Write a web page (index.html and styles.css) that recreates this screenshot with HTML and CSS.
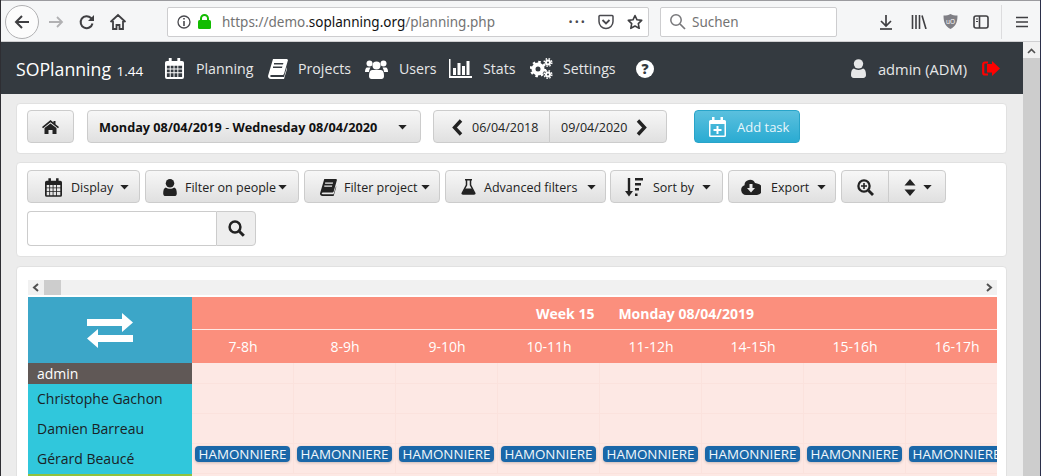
FILE: index.html
```html
<!DOCTYPE html>
<html lang="en">
<head>
<meta charset="utf-8">
<title>SOPlanning</title>
<link rel="stylesheet" href="styles.css">
</head>
<body>
<svg class="defs" width="0" height="0" aria-hidden="true">
  <symbol id="i-cal" viewBox="0 0 20 22"><path fill="currentColor" fill-rule="evenodd" d="M4 0h3v3h6V0h3v3h2a2 2 0 0 1 2 2v15a2 2 0 0 1-2 2H2a2 2 0 0 1-2-2V5a2 2 0 0 1 2-2h2zM2 8v3h3V8zm4 0v3h3V8zm4 0v3h3V8zm4 0v3h4V8zM2 12v3h3v-3zm4 0v3h3v-3zm4 0v3h3v-3zm4 0v3h4v-3zM2 16v4h3v-4zm4 0v4h3v-4zm4 0v4h3v-4zm4 0v4h4v-4z"/></symbol>
  <symbol id="i-book" viewBox="0 0 20 20"><path fill="currentColor" fill-rule="evenodd" d="M5 0h14l1 1-4 14-1 1H4c-1 0-2 .5-2 1s1 1 2 1h12l3-10v2l-3 10-1 0H3c-2 0-3-1.500-3-3zM6 4v1.500h9l.4-1.500zM5 7.500V9h9l.4-1.500z"/></symbol>
  <symbol id="i-user" viewBox="0 0 16 20"><circle cx="8" cy="5" r="5" fill="currentColor"/><path fill="currentColor" d="M3 10c1.500 1 3 1.500 5 1.500s3.500-.5 5-1.500c2 .5 3 3 3 7 0 2-1 3-3 3H3c-2 0-3-1-3-3 0-4 1-6.500 3-7z"/></symbol>
  <symbol id="i-caret" viewBox="0 0 10 6"><path fill="currentColor" d="M0 0h10L5 5.500z"/></symbol>
</svg>

<header class="browser">
  <div class="back"><svg width="20" height="20" viewBox="0 0 20 20"><path d="M17 10H4M10 4l-6 6 6 6" fill="none" stroke="#3f3f42" stroke-width="2"/></svg></div>
  <svg class="tool t-fwd" width="18" height="18" viewBox="0 0 18 18"><path d="M2 9h13M10 4l5 5-5 5" fill="none" stroke="#b1b1b3" stroke-width="1.800"/></svg>
  <svg class="tool t-reload" width="16" height="16" viewBox="0 0 16 16"><path d="M13.500 9.500A6 6 0 1 1 12 4l2 2" fill="none" stroke="#3f3f42" stroke-width="2"/><path d="M15 1v6H9z" fill="#3f3f42"/></svg>
  <svg class="tool t-home" width="18" height="18" viewBox="0 0 18 18"><path d="M1.500 9 9 2l7.500 7M4 8v8h3.500v-4h3v4H14V8" fill="none" stroke="#3f3f42" stroke-width="1.800"/></svg>
  <div class="urlbar">
    <svg class="u-info" width="14" height="14" viewBox="0 0 14 14"><circle cx="7" cy="7" r="6" fill="none" stroke="#4a4a4f" stroke-width="1.300"/><path d="M6.200 3h1.600v1.600H6.200zM6.200 6h1.600v5H6.200z" fill="#4a4a4f"/></svg>
    <svg class="u-lock" width="13" height="15" viewBox="0 0 13 15"><path d="M3 7V4.500a3.500 3.500 0 0 1 7 0V7" fill="none" stroke="#12bc00" stroke-width="2"/><rect y="6" width="13" height="9" rx="1.500" fill="#12bc00"/></svg>
    <span class="url">https://demo.<b>soplanning.org</b>/planning.php</span>
    <span class="dots">•••</span>
    <svg class="u-pocket" width="16" height="16" viewBox="0 0 16 16"><path d="M2 1.500h12A1.200 1.200 0 0 1 15 3v4.500a7 7 0 0 1-14 0V3a1.200 1.200 0 0 1 1-1.500z" fill="none" stroke="#4a4a4f" stroke-width="1.500"/><path d="m4.500 6 3.500 3.500L11.500 6" fill="none" stroke="#4a4a4f" stroke-width="1.800"/></svg>
    <svg class="u-star" width="16" height="16" viewBox="0 0 16 16"><path d="m8 1.500 2 4.300 4.700.6-3.400 3.200.9 4.700L8 12l-4.200 2.300.9-4.700L1.300 6.400 6 5.800z" fill="none" stroke="#3f3f42" stroke-width="1.600" stroke-linejoin="round"/></svg>
  </div>
  <div class="searchbar">
    <svg width="17" height="17" viewBox="0 0 17 17"><circle cx="7" cy="7" r="5.200" fill="none" stroke="#77777a" stroke-width="1.500"/><path d="m11 11 5 5" stroke="#77777a" stroke-width="1.700"/></svg>
    <span>Suchen</span>
  </div>
  <svg class="tool t-dl" width="14" height="16" viewBox="0 0 14 16"><path d="M7 1v10M2 7l5 5 5-5" fill="none" stroke="#3f3f42" stroke-width="1.700"/><path d="M1 15h12" stroke="#3f3f42" stroke-width="1.700"/></svg>
  <svg class="tool t-lib" width="16" height="14" viewBox="0 0 16 14"><path d="M1.500 0v14M5 0v14M8.500 0v14M11 .500 15 14" fill="none" stroke="#3f3f42" stroke-width="1.600"/></svg>
  <svg class="tool t-ub" width="15" height="15" viewBox="0 0 15 15"><path d="M7.500 0c2 1 4 1.500 7 1.500 0 7-2 11-7 13.500C2.500 12.500.500 8.500.500 1.500c3 0 5-.5 7-1.500z" fill="#7f7f85"/><text x="7.500" y="9.500" class="ub-text">uO</text></svg>
  <svg class="tool t-side" width="16" height="14" viewBox="0 0 16 14"><rect x="1" y="1" width="14" height="12" rx="2" fill="none" stroke="#3f3f42" stroke-width="1.600"/><path d="M6.500 1v12" stroke="#3f3f42" stroke-width="1.600"/><path d="M3 4h2M3 6.500h2" stroke="#3f3f42"/></svg>
  <span class="sep"></span>
  <svg class="tool t-menu" width="14" height="12" viewBox="0 0 14 12"><path d="M1 1.500h12M1 6h12M1 10.500h12" stroke="#3f3f42" stroke-width="1.500"/></svg>
</header>

<div class="viewport">
  <div class="page">
    <nav class="nav">
      <span class="brand">SOPlanning <small>1.44</small></span>
      <a class="nav-item i-planning"><svg width="19" height="21"><use href="#i-cal"/></svg>Planning</a>
      <a class="nav-item i-projects"><svg width="20" height="20"><use href="#i-book"/></svg>Projects</a>
      <a class="nav-item i-users"><svg width="23" height="20" viewBox="0 0 23 20"><circle cx="4.500" cy="4.500" r="3" fill="currentColor"/><circle cx="18.500" cy="4.500" r="3" fill="currentColor"/><path fill="currentColor" d="M0 13c0-3 1-4.500 2-4.500h3.500C4.500 10 4 12 4 13zM23 13c0-3-1-4.500-2-4.500h-3.500C18.500 10 19 12 19 13z"/><circle cx="11.500" cy="6.500" r="4" fill="currentColor"/><path fill="currentColor" d="M7 11h9c2 0 3 2 3 6 0 2-1 3-2.500 3h-10C5 20 4 19 4 17c0-4 1-6 3-6z"/></svg>Users</a>
      <a class="nav-item i-stats"><svg width="23" height="19" viewBox="0 0 23 19"><path fill="currentColor" d="M0 0h1.500v17H23v2H0zM4 9h3v7H4zM8.500 4h3v12h-3zM13 7h3v9h-3zM17.500 2h3v14h-3z"/></svg>Stats</a>
      <a class="nav-item i-settings"><svg width="23" height="21" viewBox="0 0 23 21"><g fill="none" stroke="currentColor"><circle cx="8" cy="11" r="4.500" stroke-width="4"/><circle cx="8" cy="11" r="7" stroke-width="2.500" stroke-dasharray="2.500 3"/><circle cx="18" cy="4.500" r="2" stroke-width="2"/><circle cx="18" cy="4.500" r="3.800" stroke-width="1.500" stroke-dasharray="1.500 1.500"/><circle cx="18" cy="16.500" r="2" stroke-width="2"/><circle cx="18" cy="16.500" r="3.800" stroke-width="1.500" stroke-dasharray="1.500 1.500"/></g></svg>Settings</a>
      <a class="nav-help">?</a>
      <span class="nav-user"><svg width="15" height="19"><use href="#i-user"/></svg>admin (ADM)</span>
      <svg class="logout" width="18" height="15" viewBox="0 0 18 15"><path fill="#f00" d="M10 3V0l8 7.500-8 7.500v-3.500H5V3z"/><path d="M6 1.500H3A1.800 1.800 0 0 0 1.200 3.300v8.400A1.800 1.800 0 0 0 3 13.500h3" fill="none" stroke="#f00" stroke-width="2.200"/></svg>
    </nav>

    <main class="content">
      <section class="card card-top">
        <button class="btn b-home"><svg width="17" height="14" viewBox="0 0 17 14"><path fill="#222" d="M8.500 0l3 2.500V1h2v3.200L17 7l-1 1.200-7.500-6-7.500 6L0 7z"/><path fill="#222" d="M8.500 3.500 14.500 8v6h-4v-4h-4v4h-4V8z"/></svg></button>
        <button class="btn b-date"><span><b>Monday 08/04/2019</b> - <b>Wednesday 08/04/2020</b></span><svg class="caret" width="9" height="5"><use href="#i-caret"/></svg></button>
        <div class="group g-nav">
          <button class="btn b-prev"><svg width="11" height="17" viewBox="0 0 11 17"><path d="M9 1.500 2.500 8.500 9 15.500" fill="none" stroke="#222" stroke-width="3.400"/></svg>06/04/2018</button>
          <button class="btn b-next">09/04/2020<svg width="11" height="17" viewBox="0 0 11 17"><path d="M2 1.500 8.500 8.500 2 15.500" fill="none" stroke="#222" stroke-width="3.400"/></svg></button>
        </div>
        <button class="btn b-add"><svg width="17" height="20" viewBox="0 0 17 20"><path fill="#fff" fill-rule="evenodd" d="M3 0h2.500v3h6V0H14v3h1.500A1.500 1.500 0 0 1 17 4.500v14a1.500 1.500 0 0 1-1.500 1.500h-14A1.500 1.500 0 0 1 0 18.500v-14A1.500 1.500 0 0 1 1.500 3H3zM1.500 7v11.500h14V7z"/><path fill="#fff" d="M7.500 9h2v3h3v2h-3v3h-2v-3h-3v-2h3z"/></svg>Add task</button>
      </section>

      <section class="card card-filters">
        <div class="row">
          <button class="btn b-display"><svg width="17" height="19"><use href="#i-cal"/></svg>Display<svg class="caret" width="9" height="5"><use href="#i-caret"/></svg></button>
          <button class="btn b-people"><svg width="14" height="17"><use href="#i-user"/></svg>Filter on people<svg class="caret" width="9" height="5"><use href="#i-caret"/></svg></button>
          <button class="btn b-proj"><svg width="17" height="17"><use href="#i-book"/></svg>Filter project<svg class="caret" width="9" height="5"><use href="#i-caret"/></svg></button>
          <button class="btn b-adv"><svg width="15" height="16" viewBox="0 0 15 16"><path d="M4 .8h7M5.500 1v5L1.200 14.200q-.2.900.8.900h11q1 0 .8-.9L9.500 6V1" fill="none" stroke="#222" stroke-width="1.500"/><path d="M3.800 9.500h7.400l2.500 5.500H1.300z" fill="#222"/></svg>Advanced filters<svg class="caret" width="9" height="5"><use href="#i-caret"/></svg></button>
          <button class="btn b-sort"><svg width="18" height="19" viewBox="0 0 18 19"><path d="M4 0v15" stroke="#222" stroke-width="2.400"/><path d="M0 13h8l-4 5.500z" fill="#222"/><path d="M10 0h8v2.500h-8zM10 5h6v2.500h-6zM10 10h4v2.500h-4zM10 15.500h2.500V18H10z" fill="#222"/></svg>Sort by<svg class="caret" width="9" height="5"><use href="#i-caret"/></svg></button>
          <button class="btn b-export"><svg width="20" height="16" viewBox="0 0 20 16"><path fill="#222" fill-rule="evenodd" d="M5 16a5 5 0 0 1-1.500-9.700A5.500 5.500 0 0 1 14 4a4 4 0 0 1 2 .5A5.800 5.800 0 0 1 16 16zM8.500 5v4H6l4 4.500 4-4.500h-2.500V5z"/></svg>Export<svg class="caret" width="9" height="5"><use href="#i-caret"/></svg></button>
          <div class="group g-zoom">
            <button class="btn b-zoom"><svg width="17" height="17" viewBox="0 0 17 17"><circle cx="7" cy="7" r="5.600" fill="none" stroke="#222" stroke-width="2.300"/><path d="m11.500 11.500 4.500 4.500" stroke="#222" stroke-width="2.800"/><path d="M6.200 4h1.600v2.200H10v1.600H7.800V10H6.200V7.800H4V6.200h2.200z" fill="#222"/></svg></button>
            <button class="btn b-sortv"><svg width="12" height="17" viewBox="0 0 12 17"><path fill="#222" d="M6 0l5.500 6.500H.5zM6 17 .5 10.500h11z"/></svg><svg class="caret" width="9" height="5"><use href="#i-caret"/></svg></button>
          </div>
        </div>
        <div class="search">
          <span class="search-input"></span>
          <button class="search-btn"><svg width="17" height="17" viewBox="0 0 17 17"><circle cx="7" cy="7" r="5.400" fill="none" stroke="#222" stroke-width="2.500"/><path d="m11.200 11.200 4.600 4.600" stroke="#222" stroke-width="3"/></svg></button>
        </div>
      </section>

      <section class="card card-plan">
        <div class="hscroll">
          <svg class="arrow" width="8" height="9" viewBox="0 0 8 9"><path d="M6 1 2 4.500 6 8" fill="none" stroke="#505050" stroke-width="2"/></svg>
          <span class="hthumb"></span>
          <svg class="arrow arrow-r" width="8" height="9" viewBox="0 0 8 9"><path d="M2 1l4 3.500L2 8" fill="none" stroke="#505050" stroke-width="2"/></svg>
        </div>
        <div class="plan">
          <div class="plan-left">
            <div class="swap"><svg width="46" height="35" viewBox="0 0 46 35"><path fill="#fff" d="M0 6h35V0l11 9.500L35 19v-6H0zM46 22H11v-6L0 25.500 11 35v-6h35z"/></svg></div>
            <div class="person p-admin">admin</div>
            <div class="person p-cyan">Christophe Gachon</div>
            <div class="person p-cyan">Damien Barreau</div>
            <div class="person p-cyan">Gérard Beaucé</div>
            <div class="p-green"></div>
          </div>
          <div class="plan-right">
            <div class="week"><b>Week 15</b><b>Monday 08/04/2019</b></div>
            <div class="grid">
              <div class="h">7-8h</div><div class="h">8-9h</div><div class="h">9-10h</div><div class="h">10-11h</div><div class="h">11-12h</div><div class="h">14-15h</div><div class="h">15-16h</div><div class="h">16-17h</div>
              <div class="c"></div><div class="c"></div><div class="c"></div><div class="c"></div><div class="c"></div><div class="c"></div><div class="c"></div><div class="c"></div>
              <div class="c"></div><div class="c"></div><div class="c"></div><div class="c"></div><div class="c"></div><div class="c"></div><div class="c"></div><div class="c"></div>
              <div class="c"></div><div class="c"></div><div class="c"></div><div class="c"></div><div class="c"></div><div class="c"></div><div class="c"></div><div class="c"></div>
              <div class="c"><span class="task">HAMONNIERE</span></div><div class="c"><span class="task">HAMONNIERE</span></div><div class="c"><span class="task">HAMONNIERE</span></div><div class="c"><span class="task">HAMONNIERE</span></div><div class="c"><span class="task">HAMONNIERE</span></div><div class="c"><span class="task">HAMONNIERE</span></div><div class="c"><span class="task">HAMONNIERE</span></div><div class="c"><span class="task">HAMONNIERE</span></div>
            </div>
          </div>
        </div>
      </section>
    </main>
  </div>
  <aside class="vscroll">
    <svg width="9" height="6" viewBox="0 0 9 6"><path d="M1 5l3.500-3.500L8 5" fill="none" stroke="#505050" stroke-width="1.600"/></svg>
    <span class="vthumb"></span>
  </aside>
</div>
</body>
</html>
```

FILE: styles.css
```css
* { box-sizing: border-box; }
html, body { margin: 0; height: 100%; overflow: hidden; }
body { width: 1041px; height: 476px; font-family: "Open Sans", "Noto Sans", sans-serif; background: #ececec; border-left: 1px solid #2e2e33; border-right: 1px solid #2b2f4a; display: flex; flex-direction: column; }
.defs { position: absolute; }
svg { display: block; flex: none; }

/* browser toolbar */
.browser { height: 42px; flex: none; display: flex; align-items: center; background: #f5f6f7; border-top: 1px solid #9b9b9f; border-bottom: 1px solid #cfcfd1; padding-top: 1px; color: #3f3f42; }
.back { width: 34px; height: 34px; margin-left: 4px; border: 1px solid #b1b1b3; border-radius: 50%; background: #fcfcfc; display: flex; align-items: center; justify-content: center; }
.t-fwd { margin-left: 8px; }
.t-reload { margin-left: 14px; }
.t-home { margin-left: 14px; }
.urlbar { width: 482px; height: 30px; margin-left: 40px; background: #fff; border: 1px solid #cdcdcf; border-radius: 2px; display: flex; align-items: center; font-family: "Noto Sans", "Open Sans", sans-serif; }
.u-info { margin-left: 9px; }
.u-lock { margin-left: 7px; }
.url { margin-left: 11px; font-size: 13.500px; color: #737373; white-space: nowrap; }
.url b { font-weight: 400; color: #111; }
.dots { margin-left: auto; font-size: 11px; letter-spacing: 2px; color: #4a4a4f; }
.u-pocket { margin-left: 11px; }
.u-star { margin-left: 13px; margin-right: 5px; }
.searchbar { width: 177px; height: 30px; margin-left: 11px; background: #fff; border: 1px solid #cdcdcf; border-radius: 2px; display: flex; align-items: center; gap: 6px; padding-left: 8px; font-size: 13.500px; color: #737373; font-family: "Noto Sans", "Open Sans", sans-serif; }
.t-dl { margin-left: 42px; }
.t-lib { margin-left: 18px; }
.t-ub { margin-left: 16px; }
.t-side { margin-left: 15px; }
.ub-text { font-family: "Open Sans", sans-serif; font-size: 6.500px; fill: #fff; text-anchor: middle; }
.sep { width: 1px; height: 34px; background: #dcdcde; margin-left: 12px; }
.t-menu { margin-left: 13px; }

/* layout */
.viewport { flex: 1; min-height: 0; display: flex; }
.page { flex: 1; min-width: 0; overflow: hidden; }
.vscroll { width: 17px; flex: none; background: #f1f1f1; display: flex; flex-direction: column; align-items: center; padding-top: 6px; }
.vthumb { width: 17px; flex: 1; margin-top: 4px; background: #cdcdcd; }

/* navbar */
.nav { height: 52px; background: #343a40; color: #fff; display: flex; align-items: center; padding: 1px 0 0 15px; font-size: 14.200px; }
.brand { font-size: 17.700px; width: 149px; white-space: nowrap; }
.brand small { font-size: 13.500px; margin-left: 1px; }
.nav-item { display: flex; align-items: center; color: #e6e7e8; white-space: nowrap; }
.nav-item svg { color: #fff; }
.i-planning svg { margin-right: 12px; }
.i-planning { width: 103px; }
.i-projects svg { margin-right: 10px; }
.i-projects { width: 97px; }
.i-users svg { margin-right: 11px; }
.i-users { width: 84px; }
.i-stats svg { margin-right: 11px; }
.i-stats { width: 81px; }
.i-settings svg { margin-right: 10px; }
.i-settings { width: 106px; }
.nav-help { width: 18px; height: 18px; border-radius: 50%; background: #fff; color: #343a40; font-size: 14px; font-weight: 800; line-height: 18px; text-align: center; }
.nav-user { display: flex; align-items: center; gap: 12px; margin-left: auto; color: #e6e7e8; white-space: nowrap; font-size: 14.700px; }
.logout { margin: 0 23px 0 15px; }

/* content */
.content { padding: 9px 0 0 15px; }
.card { background: #fff; border: 1px solid #e1e1e1; border-radius: 4px; width: 991px; }
.card-top { height: 51px; padding: 6px 10px; display: flex; align-items: flex-start; }
.card-filters { height: 95px; margin-top: 8px; padding: 7px 10px; }
.card-plan { height: 220px; margin-top: 9px; padding: 13px 10px 0 11px; }
.row { display: flex; gap: 5px; }
.btn { height: 33px; padding: 1px 0 0; border: 1px solid #ccc; border-radius: 4px; background: linear-gradient(#f7f7f7, #e0e0e0); color: #222; font: 12.500px "Open Sans", "Noto Sans", sans-serif; display: flex; align-items: center; white-space: nowrap; }
.btn .caret { color: #222; }
.b-home { width: 47px; justify-content: center; }
.b-date { width: 334px; margin-left: 13px; padding-left: 11px; font-size: 12.700px; color: #111; }
.b-date .caret { margin-left: auto; margin-right: 13px; }
.group { display: flex; }
.group .btn:first-child { border-radius: 4px 0 0 4px; }
.group .btn:last-child { border-radius: 0 4px 4px 0; margin-left: -1px; }
.g-nav { margin-left: 12px; }
.b-prev { width: 117px; padding-left: 18px; gap: 9px; }
.b-next { width: 118px; padding-left: 11px; gap: 9px; }
.b-add { width: 106px; margin-left: 27px; padding-left: 14px; gap: 11px; color: #e8f6fb; background: linear-gradient(#5bc0de, #2aabd2); border-color: #28a4c9; font-size: 13px; }

.b-display { width: 113px; padding-left: 17px; gap: 9px; }
.b-display .caret { margin-left: -2px; }
.b-people { width: 154px; padding-left: 17px; gap: 8px; }
.b-people .caret { margin-left: -6px; }
.b-proj { width: 136px; padding-left: 15px; gap: 7px; }
.b-proj .caret { margin-left: -4px; }
.b-adv { width: 161px; padding-left: 15px; gap: 8px; margin-right: -1px; }
.b-adv .caret { margin-left: 2px; }
.b-sort { width: 113px; padding-left: 14px; gap: 10px; }
.b-sort .caret { margin-left: -2px; }
.b-export { width: 108px; padding-left: 12px; gap: 10px; }
.b-export .caret { margin-left: -2px; }
.b-zoom { width: 48px; justify-content: center; }
.b-sortv { width: 58px; padding-left: 15px; gap: 7px; }

.search { display: flex; width: 229px; height: 35px; margin-top: 8px; }
.search-input { flex: 1; background: #fff; border: 1px solid #ccc; border-right: 0; border-radius: 4px 0 0 4px; }
.search-btn { width: 40px; padding: 0; background: #eee; border: 1px solid #ccc; border-radius: 0 4px 4px 0; display: flex; align-items: center; justify-content: center; }

/* planning */
.hscroll { width: 969px; height: 15px; background: #f1f1f1; display: flex; align-items: center; padding-left: 4px; }
.hthumb { width: 17px; height: 15px; margin-left: 4px; background: #cdcdcd; }
.arrow-r { margin-left: auto; margin-right: 4px; }
.plan { display: flex; width: 969px; height: 185px; margin-top: 2px; overflow: hidden; }
.plan-left { width: 164px; flex: none; }
.swap { height: 66px; background: #3ca6c8; display: flex; align-items: center; justify-content: center; }
.person { padding-left: 9px; font-size: 14px; color: #1a2226; height: 30px; background: #30c7dc; line-height: 29px; }
.p-admin { height: 21px; background: #605856; color: #fff; line-height: 21px; }
.p-green { height: 8px; background: #8fc23f; }
.plan-right { flex: 1; min-width: 0; background: #fde8e4; }
.week { height: 33px; background: #fb8f7d; border-bottom: 1px solid #ffe9e4; color: #fff; font-size: 14px; display: flex; align-items: center; gap: 24px; padding-left: 344px; }
.grid { display: grid; grid-template-columns: repeat(8, 102px); grid-template-rows: 33px 21px 30px 30px 30px; width: 816px; }
.h { background: #fb8f7d; color: #fff; font-size: 14px; display: flex; align-items: center; justify-content: center; }
.c { border-right: 1px solid #fbe2dd; border-bottom: 1px solid #fbe2dd; padding: 2px 0 0 3px; }
.task { display: block; width: 95px; height: 16px; background: #1a67a8; color: #f2f7fb; font-size: 13.400px; line-height: 16px; border-radius: 4px; text-align: center; white-space: nowrap; box-shadow: 0 1px 3px rgba(0,0,0,.2); }
```
